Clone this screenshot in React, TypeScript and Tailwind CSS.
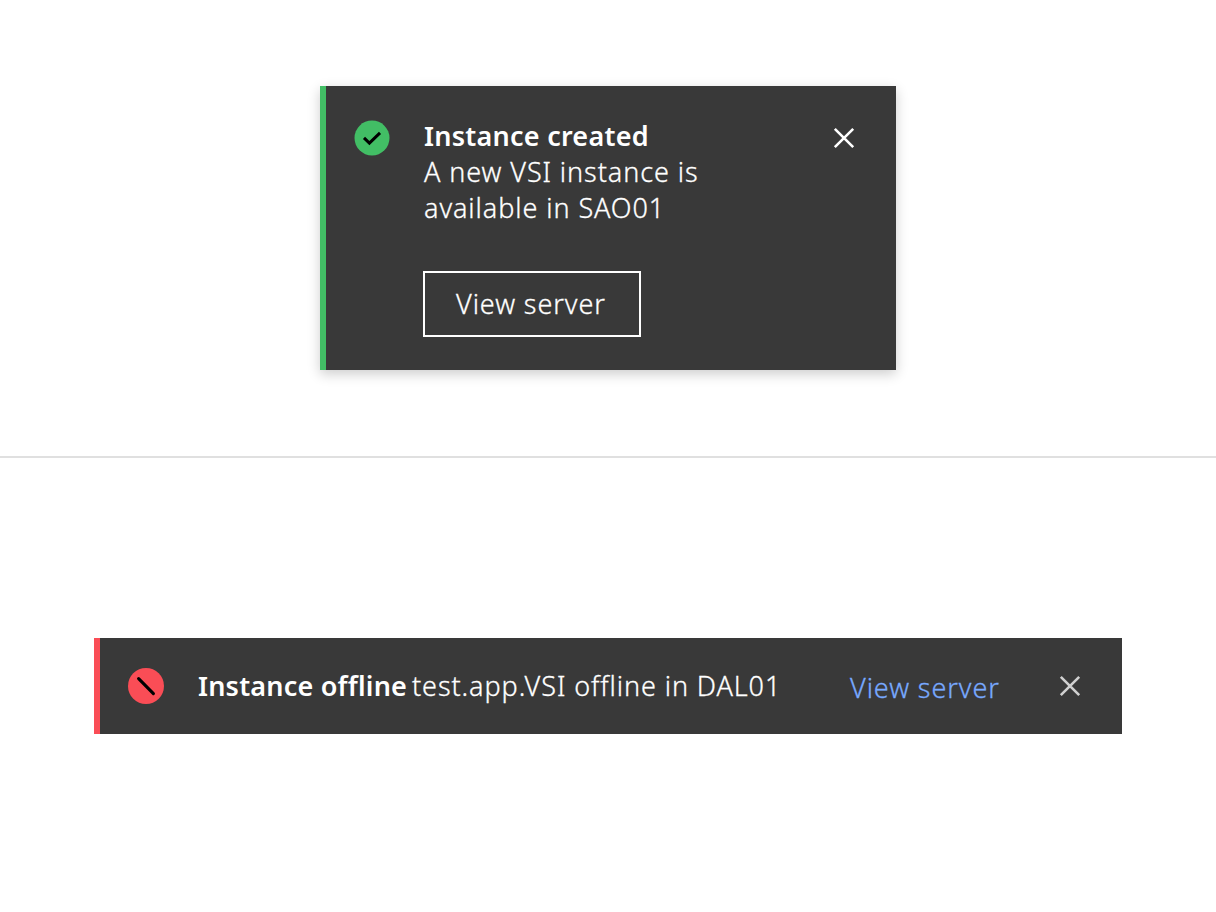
import React from "react";

function SuccessIcon() {
  return (
    <svg className="block h-9 w-9 shrink-0" viewBox="0 0 36 36" fill="none">
      <circle cx="18" cy="18" r="17.5" fill="#42be65" />
      <path d="M10 17.9 L15.4 23.1 L26 12.9" stroke="#000" strokeWidth="3" />
    </svg>
  );
}

function ErrorIcon() {
  return (
    <svg className="block h-9 w-9 shrink-0" viewBox="0 0 36 36" fill="none">
      <circle cx="18" cy="18" r="18" fill="#fa4d56" />
      <path d="M10.6 10.6 L25.4 25.6" stroke="#000" strokeWidth="3.1" strokeLinecap="round" />
    </svg>
  );
}

function CloseIcon() {
  return (
    <svg className="block h-6 w-6" viewBox="0 0 24 24" fill="none">
      <path d="M2.8 2.8 L21.2 21.2 M21.2 2.8 L2.8 21.2" stroke="currentColor" strokeWidth="2.6" />
    </svg>
  );
}

export default function App() {
  return (
    <main className="flex h-[912px] w-[1216px] flex-col overflow-hidden bg-white font-['Noto_Sans',sans-serif] text-[27px] leading-9 font-light tracking-[0.92px] whitespace-nowrap text-white [-webkit-text-stroke:0.3px_currentColor]">
      <section className="flex h-[458px] justify-center border-b-2 border-[#e0e0e0] pt-[86px]">
        <div className="flex h-[284px] w-[576px] border-l-6 border-[#42be65] bg-[#393939] pl-7 shadow-[0_4px_12px_rgba(0,0,0,0.2)]">
          <div className="pt-[34px]">
            <SuccessIcon />
          </div>
          <div className="ml-[34px] flex flex-col items-start pt-8">
            <h2 className="font-semibold tracking-[0.25px] [-webkit-text-stroke:0px]">Instance created</h2>
            <p>A new VSI instance is</p>
            <p>available in SAO01</p>
            <button className="mt-[45px] -ml-px flex h-[66px] w-[218px] items-center border-2 border-white pl-[31px]">
              View server
            </button>
          </div>
          <button aria-label="Close" className="mt-10 mr-10 ml-auto h-6 w-6">
            <CloseIcon />
          </button>
        </div>
      </section>
      <section className="flex justify-center pt-[180px]">
        <div className="flex h-24 w-[1028px] items-center border-l-6 border-[#fa4d56] bg-[#393939] pl-7">
          <ErrorIcon />
          <h2 className="ml-[34px] w-[214px] font-semibold tracking-[0.2px] [-webkit-text-stroke:0px]">Instance offline</h2>
          <p className="w-[438px]">test.app.VSI offline in DAL01</p>
          <a className="pt-1 text-[#78a9ff]">View server</a>
          <button aria-label="Close" className="mr-10 ml-auto h-6 w-6 text-[#d0d0d0]">
            <CloseIcon />
          </button>
        </div>
      </section>
    </main>
  );
}
